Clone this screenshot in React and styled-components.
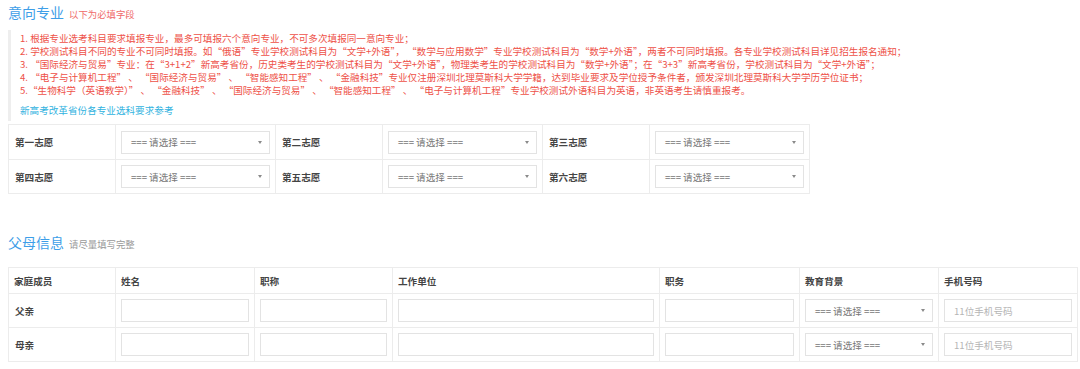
import React from "react";
import styled, { createGlobalStyle } from "styled-components";

const GlobalStyle = createGlobalStyle`
  html, body {
    margin: 0;
    padding: 0;
    background: #fff;
  }
  body {
    font-family: "Noto Sans CJK SC", "Noto Sans", sans-serif;
    color: #333;
  }
`;

const Page = styled.div`
  padding: 2px 8px 0;
`;

const Section = styled.section`
  margin-bottom: ${(p) => p.$gap || 0}px;
`;

const TitleRow = styled.div`
  display: flex;
  align-items: baseline;
  gap: 5px;
  height: 22px;
`;

const Title = styled.h2`
  margin: 0;
  font-size: 14px;
  font-weight: normal;
  color: #3d9ee8;
  line-height: 20px;
`;

const SubTitle = styled.span`
  font-size: 9.4px;
  color: ${(p) => p.$color};
`;

const Notes = styled.div`
  margin-top: 6px;
  border-left: 3px solid #eeeeee;
  padding: 2px 0 4px 9px;
`;

const NoteLine = styled.p`
  margin: 0;
  font-size: 9.6px;
  line-height: 13px;
  color: #ee5148;
  white-space: nowrap;
`;

const NoteLink = styled.a`
  display: block;
  margin-top: 7px;
  font-size: 9.6px;
  line-height: 13px;
  color: #2fb2e0;
  text-decoration: none;
`;

const Table = styled.table`
  border-collapse: collapse;
  table-layout: fixed;
  margin-top: ${(p) => p.$top || 0}px;
  width: ${(p) => p.$width}px;
`;

const Cell = styled.td`
  border: 1px solid #ececec;
  padding: 0 5px;
  height: ${(p) => p.$h || 33}px;
  box-sizing: border-box;
  font-size: 9.6px;
  font-weight: bold;
  color: #444;
  vertical-align: middle;
`;

const LabelCell = styled(Cell)`
  padding-left: 6px;
`;

const HeadCell = styled(Cell).attrs({ as: "th" })`
  text-align: left;
`;

const SelectBox = styled.div`
  display: flex;
  align-items: center;
  justify-content: space-between;
  height: 21px;
  border: 1px solid #e3e3e3;
  padding: 0 7px 0 9px;
  font-size: 9.6px;
  font-weight: normal;
  color: #777;
  background: #fff;
`;

const Arrow = styled.span`
  width: 0;
  height: 0;
  border-left: 2px solid transparent;
  border-right: 2px solid transparent;
  border-top: 3px solid #8a8a8a;
`;

const Input = styled.input`
  display: block;
  box-sizing: border-box;
  width: 100%;
  height: 23px;
  border: 1px solid #e3e3e3;
  padding: 0 9px;
  font-family: inherit;
  font-size: 9.6px;
  color: #333;
  outline: none;
  &::placeholder {
    color: #b5b5b5;
  }
`;

const Select = () => (
  <SelectBox>
    <span>=== 请选择 ===</span>
    <Arrow />
  </SelectBox>
);

const notes = [
  "1. 根据专业选考科目要求填报专业，最多可填报六个意向专业，不可多次填报同一意向专业；",
  "2. 学校测试科目不同的专业不可同时填报。如“俄语”专业学校测试科目为“文学+外语”， “数学与应用数学”专业学校测试科目为“数学+外语”，两者不可同时填报。各专业学校测试科目详见招生报名通知；",
  "3. “国际经济与贸易”专业：在“3+1+2”新高考省份，历史类考生的学校测试科目为“文学+外语”，物理类考生的学校测试科目为“数学+外语”；在“3+3”新高考省份，学校测试科目为“文学+外语”；",
  "4. “电子与计算机工程” 、 “国际经济与贸易” 、 “智能感知工程” 、 “金融科技”专业仅注册深圳北理莫斯科大学学籍，达到毕业要求及学位授予条件者，颁发深圳北理莫斯科大学学历学位证书；",
  "5.“生物科学（英语教学）” 、 “金融科技” 、 “国际经济与贸易” 、 “智能感知工程” 、 “电子与计算机工程”专业学校测试外语科目为英语，非英语考生请慎重报考。",
];

const wishes = [
  ["第一志愿", "第二志愿", "第三志愿"],
  ["第四志愿", "第五志愿", "第六志愿"],
];

const parentCols = [
  { title: "家庭成员", w: 107 },
  { title: "姓名", w: 139 },
  { title: "职称", w: 138 },
  { title: "工作单位", w: 267 },
  { title: "职务", w: 140 },
  { title: "教育背景", w: 139 },
  { title: "手机号码", w: 139 },
];

export default function App() {
  return (
    <Page>
      <GlobalStyle />
      <Section $gap={38}>
        <TitleRow>
          <Title>意向专业</Title>
          <SubTitle $color="#f06a6a">以下为必填字段</SubTitle>
        </TitleRow>
        <Notes>
          {notes.map((n) => (
            <NoteLine key={n}>{n}</NoteLine>
          ))}
          <NoteLink href="#">新高考改革省份各专业选科要求参考</NoteLink>
        </Notes>
        <Table $top={3} $width={801}>
          <colgroup>
            {[107, 160, 107, 160, 107, 160].map((w, i) => (
              <col key={i} style={{ width: w }} />
            ))}
          </colgroup>
          <tbody>
            {wishes.map((row, r) => (
              <tr key={r}>
                {row.map((label) => (
                  <React.Fragment key={label}>
                    <LabelCell $h={r === 0 ? 35 : 34}>{label}</LabelCell>
                    <Cell $h={r === 0 ? 35 : 34}>
                      <Select />
                    </Cell>
                  </React.Fragment>
                ))}
              </tr>
            ))}
          </tbody>
        </Table>
      </Section>

      <Section>
        <TitleRow>
          <Title>父母信息</Title>
          <SubTitle $color="#999">请尽量填写完整</SubTitle>
        </TitleRow>
        <Table $top={13} $width={1069}>
          <colgroup>
            {parentCols.map((c) => (
              <col key={c.title} style={{ width: c.w }} />
            ))}
          </colgroup>
          <thead>
            <tr>
              {parentCols.map((c) => (
                <HeadCell key={c.title} $h={26}>
                  {c.title}
                </HeadCell>
              ))}
            </tr>
          </thead>
          <tbody>
            {["父亲", "母亲"].map((who) => (
              <tr key={who}>
                <LabelCell $h={34}>{who}</LabelCell>
                {[0, 1, 2, 3].map((i) => (
                  <Cell key={i} $h={34}>
                    <Input />
                  </Cell>
                ))}
                <Cell $h={34}>
                  <Select />
                </Cell>
                <Cell $h={34}>
                  <Input placeholder="11位手机号码" />
                </Cell>
              </tr>
            ))}
          </tbody>
        </Table>
      </Section>
    </Page>
  );
}
